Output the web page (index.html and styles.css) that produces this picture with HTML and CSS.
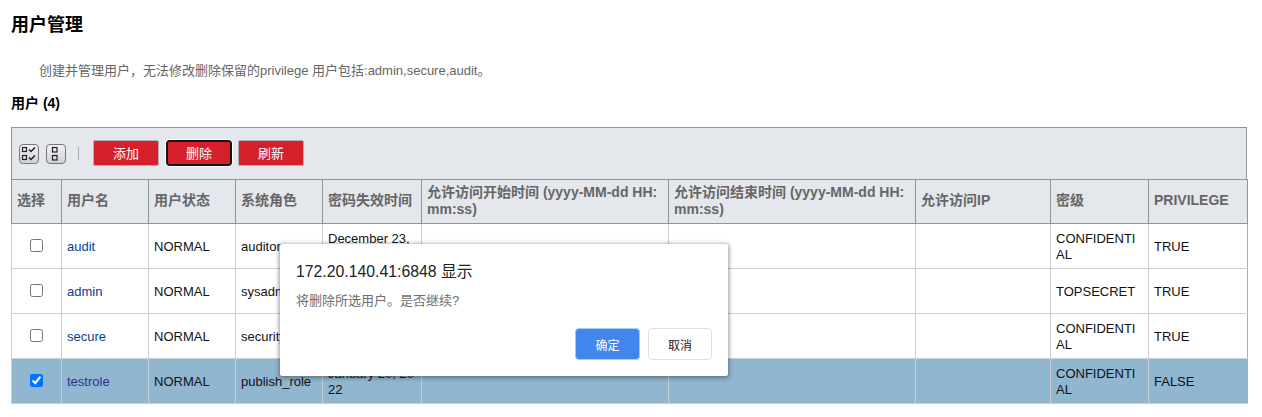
FILE: index.html
```html
<!DOCTYPE html>
<html lang="zh">
<head>
<meta charset="utf-8">
<title>用户管理</title>
<link rel="stylesheet" href="styles.css">
</head>
<body>
<h1 class="title">用户管理</h1>
<p class="desc">创建并管理用户，无法修改删除保留的privilege 用户包括:admin,secure,audit。</p>
<h2 class="sub">用户 (4)</h2>
<div class="panel">
  <div class="toolbar">
    <button class="icon-btn" aria-label="全选">
      <svg width="18" height="18" viewBox="0 0 18 18" fill="none" stroke="#222" stroke-width="1.2"><rect x="2.5" y="2.5" width="4" height="4"/><rect x="2.5" y="10.5" width="4" height="4"/><path d="M9 4.5l2 2 4-4M9 12.5l2 2 4-4" stroke-width="1.5"/></svg>
    </button>
    <button class="icon-btn" aria-label="全不选">
      <svg width="18" height="18" viewBox="0 0 18 18" fill="none" stroke="#222" stroke-width="1.2"><rect x="5.5" y="2.5" width="4.5" height="4.5"/><rect x="5.5" y="10.5" width="4.5" height="4.5"/></svg>
    </button>
    <span class="sep"></span>
    <button class="red-btn">添加</button>
    <button class="red-btn focused">删除</button>
    <button class="red-btn">刷新</button>
  </div>
  <table class="grid">
    <colgroup>
      <col class="c1"><col class="c2"><col class="c3"><col class="c4"><col class="c5"><col class="c6"><col class="c7"><col class="c8"><col class="c9"><col class="c10">
    </colgroup>
    <thead>
      <tr>
        <th>选择</th><th>用户名</th><th>用户状态</th><th>系统角色</th><th>密码失效时间</th>
        <th>允许访问开始时间 (yyyy-MM-dd HH:<wbr>mm:ss)</th><th>允许访问结束时间 (yyyy-MM-dd HH:<wbr>mm:ss)</th>
        <th>允许访问IP</th><th>密级</th><th>PRIVILEGE</th>
      </tr>
    </thead>
    <tbody>
      <tr>
        <td class="chk"><input type="checkbox"></td><td><a href="#">audit</a></td><td>NORMAL</td><td>auditor</td><td>December 23, 2022</td><td></td><td></td><td></td><td>CONFIDENTIAL</td><td>TRUE</td>
      </tr>
      <tr>
        <td class="chk"><input type="checkbox"></td><td><a href="#">admin</a></td><td>NORMAL</td><td>sysadmin</td><td></td><td></td><td></td><td></td><td>TOPSECRET</td><td>TRUE</td>
      </tr>
      <tr>
        <td class="chk"><input type="checkbox"></td><td><a href="#">secure</a></td><td>NORMAL</td><td>security</td><td></td><td></td><td></td><td></td><td>CONFIDENTIAL</td><td>TRUE</td>
      </tr>
      <tr class="selected">
        <td class="chk"><input type="checkbox" checked></td><td><a href="#">testrole</a></td><td>NORMAL</td><td>publish_role</td><td>January 20, 2022</td><td></td><td></td><td></td><td>CONFIDENTIAL</td><td>FALSE</td>
      </tr>
    </tbody>
  </table>
</div>
<div class="dialog">
  <div class="dlg-title">172.20.140.41:6848 显示</div>
  <div class="dlg-msg">将删除所选用户。是否继续?</div>
  <div class="dlg-actions">
    <button class="dlg-ok">确定</button>
    <button class="dlg-cancel">取消</button>
  </div>
</div>
</body>
</html>
```
FILE: styles.css
```css
* { box-sizing: border-box; }
html, body { margin: 0; height: 417px; overflow: hidden; background: #fff; }
body {
  position: relative;
  padding: 0 15px 0 11px;
  font-family: "Liberation Sans", "Noto Sans CJK SC", sans-serif;
  font-size: 14px;
  color: #000;
}
.title { margin: 0; padding-top: 12px; font-size: 18px; line-height: 26px; font-weight: bold; }
.desc { margin: 0; padding: 23px 0 0 28px; font-size: 13px; line-height: 19px; color: #666; }
.sub { margin: 0; padding-top: 14px; font-size: 14px; line-height: 18px; font-weight: bold; }
.panel { margin-top: 15px; width: 1236px; background: #e4e7ec; }
.toolbar {
  height: 52px; display: flex; align-items: center; padding-left: 7px;
  border: 1px solid #8c979f; border-bottom: 0;
}
.icon-btn {
  width: 20px; height: 20px; padding: 0; margin-right: 7px; display: flex; align-items: center; justify-content: center;
  border: 1px solid #777; border-radius: 4px;
  background: linear-gradient(#f4f4f6, #cfd1d6);
}
.sep { width: 1px; height: 13px; margin: 0 14px 0 5px; background: #aab; }
.red-btn {
  width: 66px; height: 26px; margin: 0 7px 2px 0; padding: 0;
  border: 1px solid #b5aeb2; border-radius: 2px;
  background: #d51f2a; color: #fff; font: 13px "Liberation Sans", "Noto Sans CJK SC", sans-serif;
}
.red-btn.focused { border: 2px solid #141414; outline: 1px solid #fff; border-radius: 3px; margin-right: 6px; }
.grid { width: 1236px; table-layout: fixed; border-collapse: collapse; background: #fff; }
.c1 { width: 50px; } .c2 { width: 87px; } .c3 { width: 87px; } .c4 { width: 87px; } .c5 { width: 99px; }
.c6 { width: 247px; } .c7 { width: 247px; } .c8 { width: 135px; } .c9 { width: 98px; } .c10 { width: 99px; }
.grid th {
  height: 44px; padding: 0 6px 2px 5px; background: #e4e7ec; border: 1px solid #8a979f; text-align: left;
  font-size: 14px; line-height: 17px; font-weight: bold; color: #666;
  word-break: break-word;
}
.grid td {
  height: 45px; padding: 2px 5px 0 5px; border: 1px solid #cbcfd2; font-size: 13px; line-height: 16px;
  color: #111; word-break: break-all;
}
.grid td:last-child { border-right-color: #a9adb1; }
.grid td.chk { text-align: center; padding: 0 0 2px; }
.chk input { width: 13px; height: 13px; margin: 0; vertical-align: middle; }
.grid a { color: #0b3d91; text-decoration: none; }
.selected td { background: #90b6d0; }
.grid .selected a { color: #27358f; }
.dialog {
  position: absolute; left: 280px; top: 244px; width: 448px; height: 132px;
  padding: 19px 16px 0; background: #fff; border-radius: 2px;
  box-shadow: 0 1px 4px 1px rgba(40, 50, 60, .5);
}
.dlg-title { font-size: 15.8px; line-height: 18px; color: #222; }
.dlg-msg { margin-top: 11px; font-size: 13px; line-height: 18px; color: #6e6e6e; }
.dlg-actions { display: flex; justify-content: flex-end; gap: 8px; margin-top: 18px; }
.dlg-ok, .dlg-cancel { height: 32px; width: 64px; padding: 0; border-radius: 4px; font: 12px "Liberation Sans", "Noto Sans CJK SC", sans-serif; }
.dlg-ok { width: 65px; background: #4086ec; color: #fff; border: 1px solid #a8c8f5; }
.dlg-cancel { background: #fff; color: #222; border: 1px solid #dcdfe3; }
```
